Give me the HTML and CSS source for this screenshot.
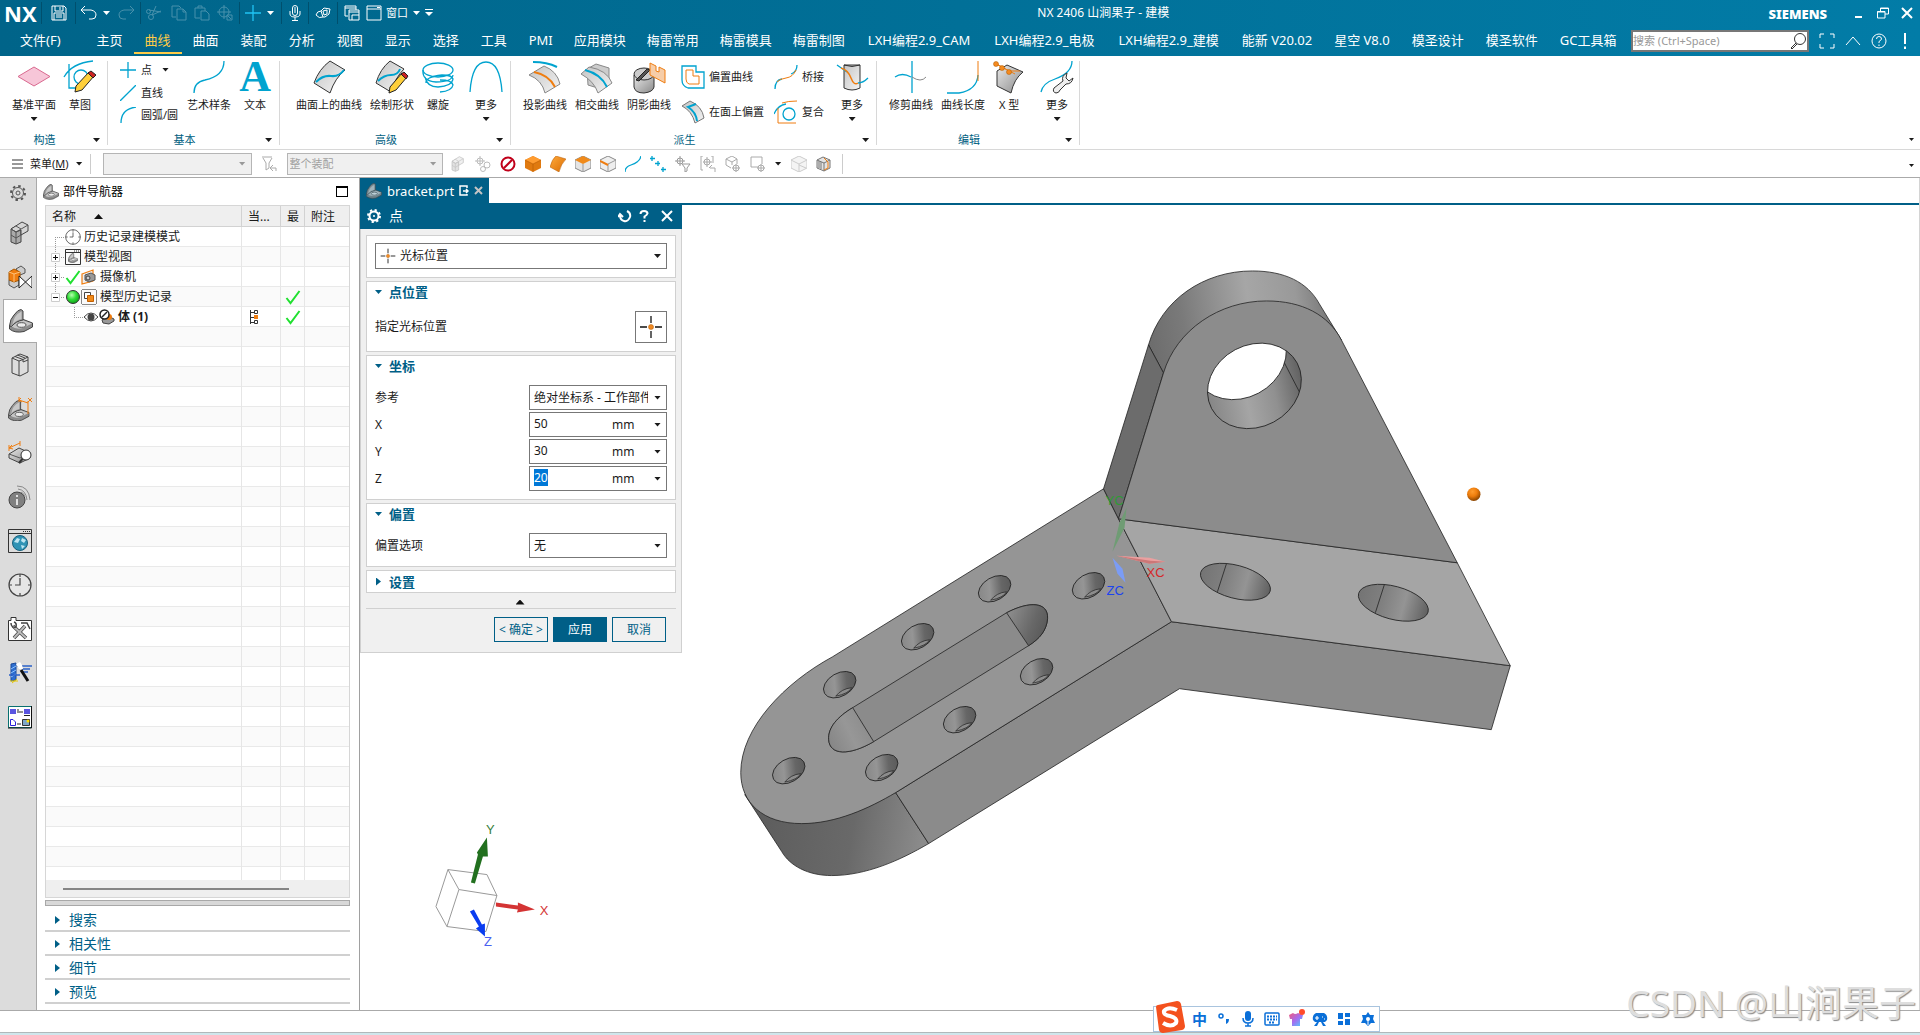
FILE: index.html
```html
<!DOCTYPE html>
<html lang="zh-CN">
<head>
<meta charset="utf-8">
<title>NX 2406 山涧果子 - 建模</title>
<link rel="stylesheet" href="styles.css">
</head>
<body>
<svg class="defs" width="0" height="0" aria-hidden="true">
  <defs>
    <linearGradient id="metal" x1="0" y1="0" x2="1" y2="1"><stop offset="0" stop-color="#e8e8e8"/><stop offset="1" stop-color="#8a8a8a"/></linearGradient>
    <linearGradient id="sheet" x1="0" y1="0" x2="1" y2="1"><stop offset="0" stop-color="#c4c4c4"/><stop offset="1" stop-color="#f4f4f4"/></linearGradient>
    <linearGradient id="gold" x1="0" y1="0" x2="1" y2="1"><stop offset="0" stop-color="#ffab3d"/><stop offset="1" stop-color="#d96a00"/></linearGradient>
    <radialGradient id="green" cx=".4" cy=".35" r=".7"><stop offset="0" stop-color="#b8ffb0"/><stop offset=".5" stop-color="#2fdc35"/><stop offset="1" stop-color="#0b9a18"/></radialGradient>
  </defs>
  <symbol id="part" viewBox="0 0 24 24"><path d="M.5 17 13 10 23.500 14V18L15 22.500Q6 24.500 .5 20Z" fill="#8c8c8c" stroke="#444"/><path d="M2 17Q7 12 13 11L23 14.500 14 19Q7 21 2 17Z" fill="#c6c6c6"/><ellipse cx="12.500" cy="16" rx="4.500" ry="2.300" fill="#ececec" stroke="#555"/><path d="M.5 17Q1 10 5 6 9 .5 12 .5L14 2V11Q7 12 2.500 17.500Z" fill="#9a9a9a" stroke="#444"/><path d="M3.500 15.500Q5 6 12.500 2.500V10Q7 11 3.500 15.500Z" fill="#c8c8c8"/></symbol>
  <symbol id="clock" viewBox="0 0 24 24"><circle cx="12" cy="12" r="11" fill="#fff" fill-opacity=".3" stroke="#444" stroke-width="1.200"/><path d="M12 5V12H7M12 1V4M12 20V23M1 12H4M20 12H23" fill="none" stroke="#444" stroke-width="1.200"/></symbol>
  <symbol id="check" viewBox="0 0 16 16"><path d="M1.500 9 5.500 14 14.500 2" fill="none" stroke="#20e030" stroke-width="2"/></symbol>
  <symbol id="cross" viewBox="0 0 24 24"><path d="M12 1V8M12 16V23M1 12H8M16 12H23" stroke="#111" stroke-width="1.300" fill="none"/><circle cx="12" cy="12" r="2.500" fill="#f08a24" stroke="#b45a00" stroke-width=".5"/></symbol>
  <symbol id="cubes" viewBox="0 0 24 24"><path d="M3 8 8 5 13 8V21L8 23 3 21Z" fill="#aaa" stroke="#444"/><path d="M3 8 14 1 20 4V10L13 14V9L8 11Z" fill="#d5d5d5" stroke="#444"/><path d="M3 8 8 11 20 4M8 11V23M8 5 13 8M3 14 8 17 13 14" fill="none" stroke="#555"/></symbol>
</svg>

<header class="app-head">
  <div class="titlebar">
    <div class="quick">
      <strong class="nx">NX</strong>
      <button class="q sep save" aria-label="保存"><svg width="16" height="16" viewBox="0 0 16 16"><path d="M1 1H13L15 3V15H1ZM4 1V6H12V1M9 2V5M3 15V8H13V15M5 10H11M5 12H11"/></svg></button>
      <button class="q sep" aria-label="撤销"><svg width="18" height="16" viewBox="0 0 18 16"><path d="M5 1 1 5 5 9M1 5H11Q16 6 16 10 16 14 12 14H9"/></svg></button>
      <i class="caret light"></i>
      <button class="q dim" aria-label="重做"><svg width="18" height="16" viewBox="0 0 18 16"><path d="M13 1 17 5 13 9M17 5H7Q2 6 2 10 2 14 6 14H9"/></svg></button>
      <button class="q sep dim after" aria-label="剪切"><svg width="16" height="16" viewBox="0 0 16 16"><path d="M10 1 6 10M3 5 15 7M6 10 15 6"/><circle cx="5" cy="12" r="2.500"/><circle cx="2.500" cy="6.500" r="2"/></svg></button>
      <button class="q dim" aria-label="复制"><svg width="16" height="16" viewBox="0 0 16 16"><path d="M5 12H1V1H8L10 3M6 4H12L15 7V15H6ZM12 4V7H15"/></svg></button>
      <button class="q dim" aria-label="粘贴"><svg width="16" height="16" viewBox="0 0 16 16"><path d="M6 13H1V3H11V6M4 3V1H8V3M7 6H12L15 9V15H7Z"/></svg></button>
      <button class="q dim" aria-label="定位"><svg width="16" height="16" viewBox="0 0 16 16"><circle cx="7" cy="7" r="5"/><path d="M7 0V14M0 7H14M10 10H15V15H10ZM10 10 14 14"/></svg></button>
      <button class="q sep after" aria-label="点"><svg width="16" height="16" viewBox="0 0 16 16"><path class="cy" d="M8 0V16M0 8H16"/></svg></button>
      <i class="caret light"></i>
      <button class="q sep after" aria-label="语音"><svg width="12" height="16" viewBox="0 0 12 16"><rect x="3.500" y=".5" width="5" height="10" rx="2.500"/><path d="M1 6V9Q1 12 6 12 11 12 11 9V6M6 12V15M3 15.500H9M5 3H7M5 5H7M5 7H7"/></svg></button>
      <button class="q sep wide" aria-label="擦除"><svg width="16" height="16" viewBox="0 0 16 16"><path d="M1 10Q2 6 6 6L8 12Q4 14 1 10M6 6 9 3 15 4 14 9 10 12 8 12M8 6 12 5 12 9 9 10Z"/></svg></button>
      <button class="q sep wide" aria-label="切换窗口"><svg width="16" height="16" viewBox="0 0 16 16"><path d="M4 11H1V1H12V5M1 3H12M5 5H15V15H5ZM5 7H15M8 10H15M8 10V15"/></svg></button>
      <button class="q win"><svg width="16" height="16" viewBox="0 0 16 16"><path d="M1 1H15V15H1ZM1 4H15M11 2.500H14"/></svg><span>窗口</span><i class="caret light"></i></button>
      <button class="q more" aria-label="自定义"><svg width="8" height="8" viewBox="0 0 8 8"><path d="M0 .5H8"/><path class="lit" d="M0 3H8L4 7Z"/></svg></button>
    </div>
    <h1>NX 2406 山涧果子 - 建模</h1>
    <div class="sys">
      <strong>SIEMENS</strong>
      <button aria-label="最小化"><svg width="12" height="12" viewBox="0 0 12 12"><path d="M2 10H9" stroke-width="2"/></svg></button>
      <button aria-label="还原"><svg width="12" height="12" viewBox="0 0 12 12"><path d="M3.500 4V1H11.500V7H8M3 1.500H12M.500 4.500H8V11H.500ZM0 5H8"/></svg></button>
      <button aria-label="关闭"><svg width="12" height="12" viewBox="0 0 12 12"><path d="M1 1 11 11M11 1 1 11" stroke-width="2"/></svg></button>
    </div>
  </div>
  <nav class="tabs">
    <button class="file">文件(F)</button>
    <button>主页</button><button class="on">曲线</button><button>曲面</button><button>装配</button><button>分析</button><button>视图</button><button>显示</button><button>选择</button><button>工具</button><button>PMI</button><button class="cjk4">应用模块</button><button class="cjk4">梅雷常用</button><button class="cjk4">梅雷模具</button><button class="cjk4">梅雷制图</button><button class="mixed">LXH编程2.9_CAM</button><button class="mixed">LXH编程2.9_电极</button><button class="mixed">LXH编程2.9_建模</button><button>能新 V20.02</button><button>星空 V8.0</button><button>模圣设计</button><button>模圣软件</button><button>GC工具箱</button>
    <div class="find">
      <label class="search"><input type="text" placeholder="搜索 (Ctrl+Space)" aria-label="搜索"><svg width="18" height="18" viewBox="0 0 18 18"><circle cx="11" cy="7" r="5.500" fill="none" stroke="#333"/><path d="M7 11 2 16M8 12 3 17M2 16 3 17" stroke="#333" fill="none"/></svg></label>
      <button aria-label="全屏"><svg width="16" height="16" viewBox="0 0 16 16"><path d="M1 5V1H5M11 1H15V5M15 11V15H11M5 15H1V11"/></svg></button>
      <button aria-label="收起"><svg width="16" height="16" viewBox="0 0 16 16"><path d="M1 12 8 4 15 12"/></svg></button>
      <button aria-label="帮助"><svg width="16" height="16" viewBox="0 0 16 16"><circle cx="8" cy="8" r="7"/><path d="M5.500 6Q5.500 3.500 8 3.500 10.500 3.500 10.500 6 10 7.500 8 8.500V10M8 11.500V13"/></svg></button>
      <button aria-label="提示"><svg width="16" height="16" viewBox="0 0 16 16"><path d="M8 0V11M8 13.500V16" stroke-width="2"/></svg></button>
    </div>
  </nav>
</header>

<section class="ribbon">
  <div class="group">
    <div class="tools">
      <button class="big"><svg viewBox="0 0 32 32"><path d="M0 15.500 16 6 32 15.500 16 25Z" fill="#f7c6d8" stroke="#d9698f"/></svg>基准平面<i class="caret"></i></button>
      <button class="big"><svg viewBox="0 0 32 32"><g class="cy"><path d="M5 3V27H16M0 16Q8 2 29 0"/><circle cx="17" cy="16" r="7"/></g><path d="M12 25 25 11 30 15 18 29 11 31Z" fill="#ffcf3a" stroke="#222"/><path d="M24 12 27 10 32 14 29 17Z" fill="#c22" stroke="#222"/></svg>草图</button>
    </div>
    <footer><span>构造</span><i class="caret"></i></footer>
  </div>
  <div class="group">
    <div class="tools">
      <div class="stack three">
        <button><svg width="16" height="16" viewBox="0 0 16 16"><path class="cy" d="M8 0V16M0 8H16"/></svg>点<i class="caret"></i></button>
        <button><svg width="16" height="16" viewBox="0 0 16 16"><path class="cy" d="M0 16 16 0"/></svg>直线</button>
        <button><svg width="16" height="16" viewBox="0 0 16 16"><path class="cy" d="M1 16Q1 2 16 0"/></svg>圆弧/圆</button>
      </div>
      <button class="big"><svg viewBox="0 0 32 32"><path class="cy" d="M1 32Q1 21 12 19 31 15 31 0"/></svg>艺术样条</button>
      <button class="big"><span class="glyph">A</span>文本</button>
    </div>
    <footer><span>基本</span><i class="caret"></i></footer>
  </div>
  <div class="group roomy">
    <div class="tools">
      <button class="big"><svg viewBox="0 0 32 32"><path d="M1 22Q6 8 17 0L32 9Q22 17 17 32Z" fill="url(#sheet)" stroke="#333"/><path class="cy thick" d="M3 21Q10 14 18 15T31 9"/></svg>曲面上的曲线</button>
      <button class="big"><svg viewBox="0 0 32 32"><path d="M0 22Q4 8 14 0L28 8Q19 17 15 31Z" fill="url(#sheet)" stroke="#333"/><path class="cy thick" d="M2 20Q8 14 15 14T24 8"/><path d="M14 26 26 12 31 16 20 29 13 32Z" fill="#ffcf3a" stroke="#222"/><path d="M25 13 28 11 32 15 30 18Z" fill="#c22" stroke="#222"/></svg>绘制形状</button>
      <button class="big"><svg viewBox="0 0 32 32"><g class="cy"><ellipse cx="16" cy="9" rx="15" ry="7"/><path d="M1 9Q0 20 14 21 30 21 31 14M3 16Q5 26 16 26 30 25 31 18 30 14 20 14 3 16 4 22M18 31Q30 30 31 24 30 19 18 19"/></g></svg>螺旋</button>
      <button class="big gapped"><svg viewBox="0 0 32 32"><path class="cy" d="M0 31Q2 1 16 1T32 31"/></svg>更多<i class="caret"></i></button>
    </div>
    <footer><span>高级</span><i class="caret"></i></footer>
  </div>
  <div class="group">
    <div class="tools">
      <button class="big"><svg viewBox="0 0 32 32"><path d="M0 14 15 5Q28 10 31 23L16 32Q13 19 0 14Z" fill="url(#sheet)" stroke="#888"/><path d="M5 11Q20 14 26 26" fill="none" stroke="#ef7d10" stroke-width="2"/><path class="cy thick" d="M4 1Q18 1 28 6"/></svg>投影曲线</button>
      <button class="big"><svg viewBox="0 0 32 32"><path d="M6 8 15 3 28 7 28 22 20 28 7 24Z" fill="#ccc" stroke="#888"/><path d="M0 13 8 6Q26 9 31 22L17 32Q13 20 0 13Z" fill="url(#sheet)" stroke="#888"/><path class="cy thick" d="M4 9Q20 13 26 26"/></svg>相交曲线</button>
      <button class="big"><svg viewBox="0 0 32 32"><path d="M1 14V26Q2 32 11 32 20 31 21 26V14Z" fill="url(#metal)" stroke="#333"/><ellipse cx="11" cy="13" rx="10" ry="6" fill="#ccc" stroke="#333"/><path d="M3 19 14 8 17 9 6 20Z" fill="#555" stroke="#222"/><path d="M17 12V2L23 5V10L26 11V6L32 9V22L17 14Z" fill="#f6cda8" stroke="#ef7d10"/></svg>阴影曲线</button>
      <div class="stack two first">
        <button><svg width="24" height="24" viewBox="0 0 24 24"><path class="cy" d="M1 1H15V7H23V23H7Q1 21 1 15Z"/><path d="M5 5H12V11H18V19H8Q5 18 5 14Z" fill="none" stroke="#ef7d10"/></svg>偏置曲线</button>
        <button><svg width="24" height="24" viewBox="0 0 24 24"><path d="M1 6 9 1Q21 6 23 18L14 23Q11 11 1 6Z" fill="url(#sheet)" stroke="#777"/><path class="cy thick" d="M15 4 7 7Q15 12 16 21"/></svg>在面上偏置</button>
      </div>
      <div class="stack two">
        <button><svg width="24" height="24" viewBox="0 0 24 24"><path class="cy" d="M1 24Q1 15 8 14M17 9Q23 7 23 0"/><path d="M3 17Q5 14 12 13T22 5" fill="none" stroke="#ef7d10"/></svg>桥接</button>
        <button><svg width="24" height="24" viewBox="0 0 24 24"><path class="cy" d="M0 14Q4 5 12 4"/><circle class="cy" cx="15" cy="14" r="6"/><path d="M8 3Q14 1 23 1M4 8V23H22" fill="none" stroke="#ef7d10"/></svg>复合</button>
      </div>
      <button class="big"><svg viewBox="0 0 32 32"><path d="M8 4V27Q16 31 24 27V4Z" fill="url(#sheet)" stroke="#333"/><path d="M8 4Q16 7 24 4" fill="none" stroke="#333"/><path class="cy" d="M1 4 11 11M22 22Q27 22 32 17"/><path d="M5 7Q12 9 15 17T22 22" fill="none" stroke="#ef7d10" stroke-width="1.500"/></svg>更多<i class="caret"></i></button>
    </div>
    <footer><span>派生</span><i class="caret"></i></footer>
  </div>
  <div class="group last">
    <div class="tools">
      <button class="big"><svg viewBox="0 0 32 32"><path class="cy" d="M17 0V32M0 16Q7 11 16 16"/><path d="M17 16Q26 22 31 16" fill="none" stroke="#888"/></svg>修剪曲线</button>
      <button class="big"><svg viewBox="0 0 32 32"><path class="cy" d="M0 32H12Q30 29 31 14"/><path d="M31 0V20" fill="none" stroke="#ef7d10"/></svg>曲线长度</button>
      <button class="big"><svg viewBox="0 0 32 32"><path d="M4 10 14 4 30 11Q21 18 18 32L4 25Z" fill="url(#metal)" stroke="#333"/><path d="M3 3 22 13M2 2 16 10 27 10" fill="none" stroke="#ef7d10"/><g fill="#f58a1f" stroke="#a85800" stroke-width=".5"><circle cx="3" cy="3" r="2.500"/><circle cx="9" cy="7" r="2.500"/><circle cx="16" cy="11" r="2.500"/></g></svg>X 型</button>
      <button class="big gapped"><svg viewBox="0 0 32 32"><path class="cy" d="M0 31Q2 22 14 18 31 12 31 0"/><path d="M26 12Q20 15 22 20L13 27Q11 31 15 32 18 32 19 29L25 23Q31 23 32 17L28 20 25 17Z" fill="#eee" stroke="#333"/></svg>更多<i class="caret"></i></button>
    </div>
    <footer><span>编辑</span><i class="caret"></i></footer>
  </div>
  <div class="overflow"><i class="caret"></i></div>
</section>

<section class="selbar">
  <button class="menu"><svg width="11" height="10" viewBox="0 0 11 10"><path d="M0 1H11M0 5H11M0 9H11" stroke="#333"/></svg><span>菜单(<u>M</u>)</span><i class="caret"></i></button>
  <span class="combo off w1"><select disabled aria-label="类型过滤器"><option></option></select><i class="caret"></i></span>
  <svg class="pic" width="17" height="18" viewBox="0 0 17 18"><path d="M1 2H11M2 3 5 8V15L8 13V8L11 3M10 13H15M12 10 9 13 12 16M15 13V16" fill="none" stroke="#aaa"/></svg>
  <span class="combo off w2"><select disabled aria-label="选择范围"><option>整个装配</option></select><i class="caret"></i></span>
  <div class="filters">
    <svg width="16" height="16" viewBox="0 0 24 24" opacity=".35"><use href="#cubes"/></svg>
    <svg width="16" height="16" viewBox="0 0 16 16"><g fill="none" stroke="#bbb"><circle cx="5" cy="5" r="3"/><path d="M5 0V10M0 5H10"/><circle cx="12" cy="9" r="3"/><circle cx="8" cy="13" r="2.500"/></g></svg>
    <svg width="16" height="16" viewBox="0 0 16 16"><circle cx="8" cy="8" r="6.500" fill="#fff" stroke="#c0001a" stroke-width="2"/><path d="M4 12 12 4" stroke="#c0001a" stroke-width="2"/></svg>
    <svg width="16" height="16" viewBox="0 0 16 16"><path d="M0 4 8 0 16 4V12L8 16 0 12Z" fill="#e07a10"/><path d="M0 4 8 0 16 4 8 8Z" fill="#ff9c30"/><path d="M0 4 8 8 16 4M8 8V16" stroke="#b65a00" fill="none" stroke-width=".6"/></svg>
    <svg width="16" height="16" viewBox="0 0 16 16"><path d="M0 11Q2 3 6 0L16 3Q11 8 9 16Z" fill="url(#gold)" stroke="#b65a00" stroke-width=".5"/></svg>
    <svg width="16" height="16" viewBox="0 0 16 16"><path d="M0 4 8 0 16 4V12L8 16 0 12Z" fill="#e4e4e4" stroke="#888"/><path d="M0 4 8 0 16 4 8 8Z" fill="#f08a1a"/><path d="M8 8V16" stroke="#999"/></svg>
    <svg width="16" height="16" viewBox="0 0 16 16"><path d="M0 4 8 0 16 4V12L8 16 0 12Z" fill="#eee" stroke="#888"/><path d="M8 8V16M8 8 16 4" stroke="#999"/><path d="M0 5 8 9" stroke="#ef7d10" stroke-width="2"/></svg>
    <svg width="16" height="16" viewBox="0 0 16 16"><path class="cy" d="M0 16Q0 11 6 9 15 6 16 0"/></svg>
    <svg width="16" height="16" viewBox="0 0 16 16"><path class="cy" d="M2 0V5M0 2.500H5M8 5V10M5 7.500H10M13 11V16M11 13.500H16"/></svg>
    <svg width="16" height="16" viewBox="0 0 16 16"><g fill="none" stroke="#999"><circle cx="5" cy="5" r="3"/><path d="M5 0V10M0 5H10M7 8H15L12 12V15L10 16V12Z"/></g></svg>
    <svg width="16" height="16" viewBox="0 0 16 16"><g fill="none" stroke="#aaa"><path d="M3 0H1V14H3M11 0H13V7M9 12 12 9M10 12H15V16"/><circle cx="7" cy="6" r="3"/><path d="M7 1V11M3 6H12"/></g></svg>
    <svg width="16" height="16" viewBox="0 0 16 16"><g fill="none" stroke="#aaa"><path d="M1 3 7 0 12 3V8M1 3V9L6 12M1 3 7 6 12 3M7 6V9"/><circle cx="11" cy="12" r="3"/><path d="M11 8V16M7 12H15"/></g></svg>
    <svg width="16" height="16" viewBox="0 0 16 16"><g fill="none" stroke="#aaa"><path d="M8 11H1V1H12V8"/><circle cx="11" cy="12" r="3"/><path d="M11 8V16M7 12H15"/></g></svg>
    <i class="caret"></i>
    <svg width="16" height="16" viewBox="0 0 16 16"><path d="M0 4 8 0 16 4V12L8 16 0 12Z" fill="#f4f4f4" stroke="#ccc"/><path d="M0 4 8 8 16 4M8 8V16M8 9 15 12" stroke="#ccc" fill="none"/></svg>
    <svg width="16" height="16" viewBox="0 0 16 16"><path d="M1 4 7 1 14 4V12L8 15 1 12Z" fill="#e4e4e4" stroke="#777"/><path d="M1 4 8 7 14 4M8 7V15M5 6V13M3 5V12" stroke="#777" fill="none"/><path d="M8 2 12 6V12L8 14" fill="none" stroke="#ef7d10"/></svg>
  </div>
  <div class="overflow"><i class="caret"></i></div>
</section>

<main class="work">
  <nav class="rail">
    <button class="gear" aria-label="设置"><svg width="16" height="16" viewBox="0 0 16 16"><circle cx="8" cy="8" r="5.500" fill="none" stroke="#555"/><circle cx="8" cy="8" r="7" fill="none" stroke="#555" stroke-width="2" stroke-dasharray="2.500 3"/><circle cx="8" cy="8" r="2" fill="none" stroke="#555"/></svg></button>
    <button aria-label="装配导航器"><svg width="24" height="24"><use href="#cubes"/></svg></button>
    <button aria-label="约束导航器"><svg width="24" height="24" viewBox="0 0 24 24"><path d="M8 4 13 1 17 4V8L12 10Z" fill="#ccc" stroke="#555"/><path d="M1 15H11V20L6 23 1 20Z" fill="#ccc" stroke="#555"/><path d="M1 7 6 4 12 7V15L6 17 1 15Z" fill="#ef7d10" stroke="#a85800"/><path d="M1 7 6 9 12 7M6 9V17" fill="none" stroke="#ffc27a"/><path d="M11 11 24 23V11L11 23Z" fill="#fff" stroke="#222"/></svg></button>
    <button class="on" aria-label="部件导航器"><svg width="24" height="24"><use href="#part"/></svg></button>
    <button aria-label="重用库"><svg width="24" height="24" viewBox="0 0 24 24"><g fill="#ddd" stroke="#444"><path d="M4 5 12 1 20 4V19L12 23 4 20Z"/><path d="M4 5 11 8V23M7 3.500 15 6.500 11 8M9.500 2 17 5M15 6.500V9L20 7M15 6.500 20 4" fill="none"/></g></svg></button>
    <button aria-label="PMI 导航器"><svg width="24" height="24" viewBox="0 0 24 24"><g transform="translate(0 3) scale(.9)"><use href="#part" width="24" height="24"/></g><path d="M11 0V5M11 3 20 6M20 4V17M20 1 24 5M24 1 20 5M13 1 11 3 14 5" fill="none" stroke="#ef7d10"/></svg></button>
    <button aria-label="检查"><svg width="24" height="24" viewBox="0 0 24 24"><path d="M1 13 11 7 22 12V17L12 22 1 17Z" fill="url(#metal)" stroke="#444"/><path d="M1 13 12 17 22 12" fill="none" stroke="#555"/><path d="M1 4V10M1 7 12 2M12 0V5M4 4 1 7 5 8" fill="none" stroke="#ef7d10"/><path d="M16 16 11 22" stroke="#333" stroke-width="2"/><circle cx="18" cy="14" r="5" fill="#fff" stroke="#333"/></svg></button>
    <button aria-label="信息"><svg width="24" height="24" viewBox="0 0 24 24"><circle cx="9" cy="15" r="8" fill="#808080" stroke="#444"/><path d="M9 10V12M9 14V20" stroke="#fff" stroke-width="1.500"/><path d="M10 4Q18 5 19 15M9 1Q21 1 22 15M13 7Q16 8 17 12" fill="none" stroke="#888"/></svg></button>
    <button aria-label="浏览器"><svg width="24" height="24" viewBox="0 0 24 24"><path d="M.5.500H23.500V23.500H.500ZM1 4.500H23" fill="#ddd" stroke="#333"/><path d="M15 2.500H22" stroke="#333" stroke-dasharray="1 1"/><circle cx="12" cy="14" r="7.500" fill="#2f93b5" stroke="#17607d"/><path d="M6 13 9 9 12 10 10 14ZM14 9 18 11 16 14 13 12ZM13 16 17 17 14 20Z" fill="#bfe6f2"/></svg></button>
    <button aria-label="历史记录"><svg width="24" height="24"><use href="#clock"/></svg></button>
    <button aria-label="工具箱"><svg width="24" height="24" viewBox="0 0 24 24"><path d="M.5 3.500H3V.500H8V3.500H23.500V23.500H.500Z" fill="#fff" stroke="#333"/><g stroke="#444" fill="none"><path d="M6 21 17 9M5 9 18 21" stroke-width="3.500"/><path d="M6 21 17 9M5 9 18 21" stroke-width="2" stroke="#bbb"/><path d="M3 6Q3 11 8 10M6 5Q9 6 8 10M13 6 19 6 22 12" stroke-width="1.500"/></g></svg></button>
    <button aria-label="加工向导"><svg width="24" height="24" viewBox="0 0 24 24"><path d="M3 3 8 2V19L3 20Z" fill="#2f6fd0" stroke="#1b4a9a"/><path d="M3 8 8 5M3 12 8 9M3 16 8 13" stroke="#8fc4ff"/><path d="M9 5H24M14 8H22M13 11H20M1 14H12" stroke="#2b62c8" stroke-width="1.500"/><path d="M13 9 20 20" stroke="#111" stroke-width="3"/><path d="M8 3 12 1 14 4 15 8 11 8Z" fill="#fff"/><path d="M2 20 10 20M4 22 9 18" stroke="#e8c800"/></svg></button>
    <button aria-label="流程图"><svg width="24" height="24" viewBox="0 0 24 24"><path d="M.5 1.500H23.500V22.500H.500Z" fill="#fff" stroke="#087070"/><path d="M23.500 1V23H0" fill="none" stroke="#111"/><path d="M2 4H8V9H2ZM16 4H22V9H16Z" fill="#5a55e0"/><path d="M9 5H11M9 7H15M9 19H13M16 10.500H22" stroke="#222"/><path d="M2.500 14.500H5L7.500 17V20.500H2.500Z" fill="#fff" stroke="#2a22d8"/><path d="M14.500 14.500H21.500V20.500H14.500Z" fill="#7ea6c8" stroke="#333"/><circle cx="20" cy="16" r="1.500" fill="#ffe000"/></svg></button>
  </nav>

  <aside class="navigator">
    <header><svg width="16" height="16"><use href="#part"/></svg><h2>部件导航器</h2><button aria-label="最大化"></button></header>
    <div class="tree">
      <table>
        <colgroup><col class="c1"><col class="c2"><col class="c3"><col></colgroup>
        <thead><tr><th><span>名称</span><i class="sort"></i></th><th>当...</th><th>最</th><th>附注</th></tr></thead>
        <tbody>
          <tr><td><div class="node"><svg width="19" height="20"><path class="dots" d="M9.500 10V20M9 10.500H19"/></svg><svg width="16" height="16"><use href="#clock"/></svg><span>历史记录建模模式</span></div></td><td></td><td></td><td></td></tr>
          <tr><td><div class="node"><svg width="19" height="20"><path class="dots" d="M9.500 0V20M9 10.500H19"/><path class="box" d="M5.500 6.500H13.500V14.500H5.500Z"/><path class="sign" d="M7 10.500H12M9.500 8V13"/></svg><svg width="16" height="16" viewBox="0 0 16 16"><path d="M.5.500H15.500V15.500H.500ZM1 3.500H15" fill="none" stroke="#333"/><path d="M9 2H14" stroke="#333" stroke-dasharray="1 1"/><use href="#part" x="3" y="4" width="10" height="10"/></svg><span>模型视图</span></div></td><td></td><td></td><td></td></tr>
          <tr><td><div class="node"><svg width="19" height="20"><path class="dots" d="M9.500 0V20M9 10.500H19"/><path class="box" d="M5.500 6.500H13.500V14.500H5.500Z"/><path class="sign" d="M7 10.500H12M9.500 8V13"/></svg><svg width="16" height="16"><use href="#check"/></svg><svg width="16" height="16" viewBox="0 0 16 16"><path d="M1 5 12 1V12L1 15Z" fill="#eee" stroke="#ef7d10" stroke-width="1.200"/><path d="M4 6 10 4 14 6V11L8 13 4 11Z" fill="#999" stroke="#555"/><circle cx="7" cy="9" r="2" fill="#ccc" stroke="#444"/></svg><span>摄像机</span></div></td><td></td><td></td><td></td></tr>
          <tr><td><div class="node"><svg width="19" height="20"><path class="dots" d="M9.500 0V10M9 10.500H19"/><path class="box" d="M5.500 6.500H13.500V14.500H5.500Z"/><path class="sign" d="M7 10.500H12"/></svg><svg width="16" height="16"><circle cx="8" cy="8" r="6.500" fill="url(#green)" stroke="#333"/></svg><svg width="16" height="16" viewBox="0 0 16 16"><path d="M1 .500H15M1 15.500H15M.500 1V15M15.500 1V15" stroke="#888" fill="none"/><path d="M3.500 3.500H9.500V9.500H3.500Z" fill="#fff" stroke="#444"/><path d="M6.500 6.500H12.500V12.500H6.500Z" fill="#f08a1a" stroke="#c25f00"/></svg><span>模型历史记录</span></div></td><td></td><td class="mark"><svg width="16" height="16"><use href="#check"/></svg></td><td></td></tr>
          <tr class="body"><td><div class="node"><svg width="37" height="20"><path class="dots" d="M28.500 0V10M28 10.500H37"/></svg><svg width="16" height="16" viewBox="0 0 16 16"><path d="M1 8Q8 0 15 8 8 16 1 8Z" fill="#fff" stroke="#444"/><circle cx="8" cy="8" r="3.500" fill="#444"/></svg><svg width="16" height="16" viewBox="0 0 16 16"><path d="M3 11 9 7 15 10V12L10 15 4 14Z" fill="#999" stroke="#444"/><circle cx="10" cy="8" r="3" fill="#ef7d10"/><circle cx="5.500" cy="5.500" r="4.500" fill="#fff" stroke="#222" stroke-width="1.500"/><path d="M3 8 8 3" stroke="#222" stroke-width="1.500"/></svg><span>体 (1)</span></div></td><td class="mark left"><svg width="16" height="16" viewBox="0 0 16 16"><path d="M2.500 1V15M2 3.500H6M2 8.500H6M2 13.500H6M6.500 1.500H9.500V4.500H6.500ZM6.500 11.500H9.500V14.500H6.500Z" fill="none" stroke="#333"/><path d="M6 6H10V10H6Z" fill="#ef7d10"/></svg></td><td class="mark"><svg width="16" height="16"><use href="#check"/></svg></td><td></td></tr>
        </tbody>
      </table>
      <div class="blank"></div>
      <div class="scroll"><i></i></div>
    </div>
    <div class="splitter"></div>
    <button class="sect"><i></i>搜索</button>
    <button class="sect"><i></i>相关性</button>
    <button class="sect"><i></i>细节</button>
    <button class="sect"><i></i>预览</button>
  </aside>

  <section class="stage">
    <div class="docs"><div class="doc"><svg width="16" height="16" opacity=".8"><use href="#part"/></svg><span>bracket.prt</span><svg width="10" height="11" viewBox="0 0 10 11"><path d="M8 3V1H1V10H8V9M4 6H9M7 4 9 6 7 8" fill="none" stroke="#fff" stroke-width="1.500"/></svg><button aria-label="关闭"><svg width="9" height="9" viewBox="0 0 9 9"><path d="M1 1 8 8M8 1 1 8" stroke="#c4c4c4" stroke-width="2"/></svg></button></div></div>
    <div class="view">
      <svg class="scene" viewBox="360 205 1560 805" preserveAspectRatio="xMinYMin meet">
        <defs>
          <linearGradient id="nose" gradientUnits="userSpaceOnUse" x1="750" y1="800" x2="925" y2="830"><stop offset="0" stop-color="#5b5b5b"/><stop offset=".2" stop-color="#606060"/><stop offset=".6" stop-color="#696969"/><stop offset="1" stop-color="#8b8b8b"/></linearGradient>
          <linearGradient id="band" gradientUnits="userSpaceOnUse" x1="1150" y1="355" x2="1340" y2="325"><stop offset="0" stop-color="#6c6c6c"/><stop offset=".2" stop-color="#7a7a7a"/><stop offset=".55" stop-color="#a6a6a6"/><stop offset=".8" stop-color="#999"/><stop offset="1" stop-color="#707070"/></linearGradient>
          <linearGradient id="bore" gradientUnits="userSpaceOnUse" x1="1208" y1="400" x2="1302" y2="380"><stop offset="0" stop-color="#858585"/><stop offset=".4" stop-color="#a5a5a5"/><stop offset=".7" stop-color="#909090"/><stop offset="1" stop-color="#636363"/></linearGradient>
          <linearGradient id="pin" x1="0" y1=".2" x2="1" y2=".5"><stop offset="0" stop-color="#858585"/><stop offset=".4" stop-color="#959595"/><stop offset=".75" stop-color="#666"/><stop offset="1" stop-color="#5c5c5c"/></linearGradient>
          <linearGradient id="oval" x1="0" y1="0" x2="1" y2="0"><stop offset="0" stop-color="#747474"/><stop offset=".35" stop-color="#808080"/><stop offset=".65" stop-color="#949494"/><stop offset="1" stop-color="#606060"/></linearGradient>
          <linearGradient id="endR" gradientUnits="userSpaceOnUse" x1="1010" y1="615" x2="1048" y2="630"><stop offset="0" stop-color="#8a8a8a"/><stop offset=".6" stop-color="#686868"/><stop offset="1" stop-color="#585858"/></linearGradient>
          <linearGradient id="endL" gradientUnits="userSpaceOnUse" x1="830" y1="745" x2="872" y2="725"><stop offset="0" stop-color="#868686"/><stop offset=".5" stop-color="#979797"/><stop offset="1" stop-color="#8b8b8b"/></linearGradient>
          <radialGradient id="ball" cx=".4" cy=".3" r=".7"><stop offset="0" stop-color="#ff9c2e"/><stop offset=".5" stop-color="#ee7d0c"/><stop offset="1" stop-color="#8a4400"/></radialGradient>
          <clipPath id="lugHole"><ellipse cx="1255" cy="386" rx="48.500" ry="41" transform="rotate(-28 1255 386)"/></clipPath>
          <g id="hole"><ellipse rx="17.500" ry="11.500" transform="rotate(-30)" fill="url(#pin)"/><path d="M-4 11.500Q2 4 12 3 9 9 -4 11.500Z" fill="#8c8c8c" stroke-width=".7"/></g>
        </defs>
        <g class="edges">
          <path d="M745 795 782 852C790 866 808 876 832 876 866 876 900 861 929 844L896 793Z" fill="url(#nose)"/>
          <path d="M896 793 1172 622 1511 666 1492 730 1180 689 929 844Z" fill="#8b8b8b"/>
          <path d="M1104 489 833 657C785 683 741 728 741 773 741 803 763 824 802 824 836 824 869 809 896 793L1172 622 1119 519Z" fill="#959595"/>
          <path d="M1119 519 1458 563 1511 666 1172 622Z" fill="#a5a5a5"/>
          <path d="M1149 345C1162 300 1204 271 1253 271 1285 271 1308 282 1320 304L1342 340 1164 373Z" fill="url(#band)"/>
          <path d="M1104 489 1149 345 1164 373 1119 519Z" fill="#6c6c6c"/>
          <path d="M1119 519 1164 373C1177 330 1220 301 1267 301 1303 301 1329 315 1342 340L1458 563Z" fill="#8c8c8c"/>
          <g clip-path="url(#lugHole)"><path d="M1190 330H1320V440H1190Z" fill="url(#bore)"/><ellipse cx="1240" cy="357" rx="48.500" ry="41" transform="rotate(-28 1240 357)" fill="#fff"/><path d="M1285 363 1300 392"/></g>
          <ellipse cx="1255" cy="386" rx="48.500" ry="41" transform="rotate(-28 1255 386)" fill="none"/>
          <path d="M853 708 1007 613C1030 601 1049 602 1048 619 1047 631 1040 639 1029 646L874 742C850 756 830 756 829 740 828 728 838 717 853 708Z" fill="#8b8b8b"/>
          <path d="M1007 613C1030 601 1049 602 1048 619 1047 631 1040 639 1029 646Z" fill="url(#endR)"/>
          <path d="M853 708C838 717 828 728 829 740 830 756 850 756 874 742Z" fill="url(#endL)"/>
          <use href="#hole" x="995" y="589"/><use href="#hole" x="918" y="637"/><use href="#hole" x="840" y="685"/><use href="#hole" x="789" y="771"/>
          <use href="#hole" x="882" y="768"/><use href="#hole" x="960" y="720"/><use href="#hole" x="1037" y="672"/><use href="#hole" x="1089" y="586"/>
          <ellipse cx="1236" cy="582" rx="36" ry="16.500" transform="rotate(15 1236 582)" fill="url(#oval)"/><path d="M1227 564 1218 592"/>
          <ellipse cx="1394" cy="603" rx="36" ry="16.500" transform="rotate(15 1394 603)" fill="url(#oval)"/><path d="M1385 585 1376 613"/>
        </g>
        <path d="M1113 552 1120 523 1127 508 1125 528Z" fill="#6f9c74"/>
        <path d="M1117 556 1150 558 1166 562 1150 564Z" fill="#eaa0a0"/><path d="M1117 556 1150 564 1166 562 1151 561Z" fill="#c77"/>
        <path d="M1113 558 1123 569 1126 583 1118 574Z" fill="#7b9cf5"/>
        <g class="lab"><text x="1106" y="505" fill="#2f9a35">YC</text><text x="1147" y="577" fill="#d62828">XC</text><text x="1107" y="595" fill="#1a43f0">ZC</text></g>
        <circle cx="1474.500" cy="494.500" r="6.700" fill="url(#ball)"/>
        <path d="M448 870 487 875 497 896 459 890ZM448 870 436 907 447 927 459 890M447 927 486 932 497 896" fill="none" stroke="#999"/>
        <path d="M471 883 478 855 477 853 487 838 488 857 483 857 475 884Z" fill="#22701f"/>
        <path d="M496 903 518 906 518 903 535 910 517 913 518 910 496 907Z" fill="#d43434"/>
        <path d="M470 912 474 910 482 925 485 924 485 937 476 929 479 927Z" fill="#0a3cf0"/>
        <g class="lab"><text x="486" y="834" fill="#3a8040">Y</text><text x="540" y="915" fill="#d43434">X</text><text x="484" y="946" fill="#4a60f0">Z</text></g>
      </svg>

      <form class="dialog" onsubmit="return false">
        <header><svg width="14" height="14" viewBox="0 0 14 14"><circle cx="7" cy="7" r="4.500" fill="none" stroke="#fff" stroke-width="2"/><circle cx="7" cy="7" r="6" fill="none" stroke="#fff" stroke-width="2" stroke-dasharray="2.200 2.500"/><circle cx="7" cy="7" r="1" fill="#fff"/></svg><h3>点</h3>
          <button type="button" aria-label="重置"><svg width="14" height="14" viewBox="0 0 14 14"><path d="M9 2Q13 4 12 8 10 13 6 12 2 11 2 6M0 8 2 5 5 8"/></svg></button>
          <button type="button" aria-label="帮助"><svg width="14" height="14" viewBox="0 0 14 14"><path d="M3.500 5Q3.500 2 7 2 10.500 2 10.500 4.500 10 6 7.500 7.500V9.500M7.500 11V13"/></svg></button>
          <button type="button" aria-label="关闭" class="x"><svg width="14" height="14" viewBox="0 0 14 14"><path d="M2 2 12 12M12 2 2 12"/></svg></button>
        </header>
        <div class="sheet">
          <fieldset><span class="combo type"><svg width="16" height="16"><use href="#cross"/></svg><select aria-label="类型"><option>光标位置</option></select><i class="caret"></i></span></fieldset>
          <fieldset><legend><i class="open"></i>点位置</legend>
            <div class="line tall"><label for="pick">指定光标位置</label><button type="button" id="pick" aria-label="指定光标位置"><svg width="24" height="24"><use href="#cross"/></svg></button></div></fieldset>
          <fieldset><legend><i class="open"></i>坐标</legend>
            <div class="line"><label for="ref">参考</label><span class="combo"><select id="ref"><option>绝对坐标系 - 工作部件</option></select><i class="caret"></i></span></div>
            <div class="line"><label for="px">X</label><span class="num"><input id="px" type="text" value="50"><select aria-label="X 单位"><option>mm</option></select><i class="caret"></i></span></div>
            <div class="line"><label for="py">Y</label><span class="num"><input id="py" type="text" value="30"><select aria-label="Y 单位"><option>mm</option></select><i class="caret"></i></span></div>
            <div class="line"><label for="pz">Z</label><span class="num"><input id="pz" type="text" value="20" autofocus><select aria-label="Z 单位"><option>mm</option></select><i class="caret"></i></span></div></fieldset>
          <fieldset><legend><i class="open"></i>偏置</legend>
            <div class="line"><label for="off">偏置选项</label><span class="combo"><select id="off"><option>无</option></select><i class="caret"></i></span></div></fieldset>
          <fieldset class="shut"><legend><i class="closed"></i>设置</legend></fieldset>
          <div class="fold"><i></i></div>
          <div class="acts"><button type="button">&lt; 确定 &gt;</button><button type="button" class="main">应用</button><button type="button">取消</button></div>
        </div>
      </form>
    </div>
  </section>
</main>

<footer class="status"></footer>

<div class="ime">
  <svg class="logo" width="32" height="32" viewBox="0 0 32 32"><path d="M2 6Q2 4 4 4L23 0Q26 0 27 3L31 25Q31 28 28 29L9 32Q6 32 5 29Z" fill="#f4511e"/><path d="M23 9Q14 5 10 10 9 14 16 15 24 17 22 22 17 27 9 22" fill="none" stroke="#fff" stroke-width="4"/></svg>
  <b>中</b>
  <svg viewBox="0 0 16 16"><circle cx="5" cy="5" r="2" fill="none" stroke="#0a6fd8" stroke-width="1.500"/><path d="M10 8H13Q13 12 10 13" fill="#0a6fd8"/></svg>
  <svg viewBox="0 0 16 16"><rect x="5" y="0" width="6" height="10" rx="3" fill="#0a6fd8"/><path d="M3 7Q3 12 8 12 13 12 13 7M8 12V15M5 15H11" fill="none" stroke="#0a6fd8" stroke-width="1.500"/></svg>
  <svg viewBox="0 0 16 16"><rect x="1" y="2" width="14" height="12" rx="1" fill="none" stroke="#0a6fd8" stroke-width="1.500"/><path d="M3 5.500H13M3 8.500H13M5 11.500H11" stroke="#0a6fd8" stroke-width="2" stroke-dasharray="2 1"/></svg>
  <svg viewBox="0 0 16 16"><defs><linearGradient id="shirt" x1="0" y1="0" x2="1" y2="1"><stop offset="0" stop-color="#f25a7a"/><stop offset=".5" stop-color="#a56cf0"/><stop offset="1" stop-color="#46d4ff"/></linearGradient></defs><path d="M1 4 5 2Q7 4 10 2L15 4 14 8H12V15H4V8H2Z" fill="url(#shirt)"/><circle cx="14" cy="1" r="3" fill="#ff4b2b"/></svg>
  <svg viewBox="0 0 16 16"><path d="M4 2H12Q16 4 15 9L13 11H3L1 9Q0 4 4 2ZM2 15 5 11H7L5 15ZM14 15 11 11H9L11 15Z" fill="#0a6fd8"/><path d="M3 7H7M5 5V9M10 6H11M12 8H13" stroke="#fff" stroke-width="1.200"/></svg>
  <svg viewBox="0 0 16 16"><path d="M2 2H7V8H2ZM9 2H14V6H9ZM2 10H7V14H2ZM9 8H14V14H9Z" fill="#0a6fd8"/></svg>
  <svg viewBox="0 0 16 16"><path d="M8 1 10 4 14 4 13 8 15 12 11 12 8 15 5 12 1 12 3 8 2 4 6 4Z" fill="#0a6fd8"/><circle cx="8" cy="8" r="2" fill="#fff"/><path d="M8 8V14" stroke="#fff"/></svg>
</div>
<div class="watermark">CSDN @山涧果子</div>
<script>
  document.getElementById('pz').select();
</script>
</body>
</html>
```
FILE: styles.css
```css
* { box-sizing: border-box; }
html, body { height: 100%; }
body {
  margin: 0;
  display: flex;
  flex-direction: column;
  background: #fff;
  color: #1a1a1a;
  font: 12px/16px "Noto Sans", "Noto Sans CJK SC", sans-serif;
  overflow: hidden;
}
button, input, select { font: inherit; color: inherit; margin: 0; padding: 0; border: 0; background: none; border-radius: 0; }
button { display: flex; align-items: center; justify-content: center; white-space: nowrap; }
input:focus, select:focus { outline: none; }
select { appearance: none; }
h1, h2, h3 { margin: 0; font-weight: 400; font-size: 12px; }
svg { flex: none; display: block; }
.defs { position: absolute; }
.caret { flex: none; width: 7px; height: 4px; background: #1a1a1a; clip-path: polygon(0 0, 100% 0, 50% 100%); }
.caret.light { background: #fff; }
.cy { fill: none; stroke: #00a3cf; stroke-width: 1.3; }
.thick { stroke-width: 2; }

/* title bar and tabs */
.app-head { background: linear-gradient(90deg, #006489, #027ca7); color: #fff; }
.titlebar { display: flex; align-items: center; height: 26px; }
.titlebar h1 { flex: 1; text-align: center; }
.quick { display: flex; align-items: center; padding-left: 4px; }
.quick svg, .sys svg, .find > button svg { fill: none; stroke: #fff; }
.quick svg .lit { fill: #fff; stroke: none; }
.quick svg .cy { stroke: #1fc4f4; }
.nx { width: 37px; font: 700 22px/24px "Open Sans", sans-serif; }
.q { width: 23px; height: 22px; }
.q.sep { border-left: 1px solid #004f6d; width: 27px; }
.q.save { width: 34px; }
.q.wide { width: 29px; }
.q.after { margin-left: 3px; }
.quick > .caret { margin: 0 4px 0 1px; }
.q.dim svg { opacity: .28; }
.q.win { width: auto; gap: 4px; font-size: 11px; }
.q.win .caret { margin-left: 1px; }
.q.more { width: 18px; }
.sys { display: flex; justify-content: flex-end; align-items: center; gap: 12px; padding-right: 7px; }
.sys strong { font: 900 13px/16px "Noto Sans", sans-serif; margin-right: 14px; padding-top: 2px; }
.tabs { display: flex; height: 30px; font-size: 13px; }
.tabs > button { padding: 2px 11px 0; border-bottom: 2px solid transparent; height: 28px; }
.tabs > .cjk4 { padding-left: 10px; }
.tabs > .mixed { padding-left: 12px; padding-right: 12px; }
.tabs > .file { padding: 2px 25px 0 20px; }
.tabs > .on { color: #ffcb47; border-color: #ffcb47; }
.find { flex: 1; display: flex; align-items: center; justify-content: flex-end; gap: 10px; padding: 4px 7px 4px 0; }
.search { display: flex; align-items: center; width: 178px; height: 22px; border: 2px solid #777; background: #fff; font-size: 11px; }
.search input { flex: 1; min-width: 0; color: #333; }
.search input::placeholder { color: #999; }

/* ribbon */
.ribbon { display: flex; height: 94px; border-bottom: 1px solid #d8d8d8; font-size: 11px; }
.group { display: flex; flex-direction: column; justify-content: space-between; margin: 5px 0 4px; padding-left: 8px; border-right: 1px solid #d8d8d8; }
.group.roomy { padding-left: 12px; }
.group.roomy footer { margin-left: -12px; }
.tools { display: flex; align-items: flex-start; padding-right: 4px; }
.big { flex-direction: column; justify-content: flex-start; min-width: 38px; padding: 0 4px; line-height: 14px; }
.big svg, .glyph { width: 32px; height: 32px; margin-bottom: 5px; overflow: visible; }
.big .caret { margin-top: 5px; }
.big.gapped { margin-left: 8px; }
.glyph { font: 700 44px/32px "Liberation Serif", serif; color: #00a3cf; }
.group footer { display: flex; align-items: center; height: 10px; margin-left: -8px; color: #00607f; line-height: 10px; }
.group footer span { flex: 1; text-align: center; }
.group footer .caret, .overflow .caret { margin: 0 7px 0 4px; }
.group:first-child .tools { padding-right: 7px; }
.group.last .tools { padding-right: 2px; }
.stack { display: flex; flex-direction: column; align-items: flex-start; }
.stack button { gap: 4px; }
.stack.three { padding: 0 5px 0 4px; }
.stack.three button { height: 23px; margin-top: -1px; gap: 5px; }
.stack.three button:first-child { height: 17px; margin: 0 0 4px; }
.stack.three .caret { margin-left: 5px; }
.stack.two { gap: 11px; padding: 4px 8px 0 2px; }
.stack.two.first { padding-left: 6px; }
.overflow { margin-left: auto; display: flex; align-items: flex-end; padding-bottom: 8px; }
.ribbon .overflow .caret, .selbar .overflow .caret { width: 5px; height: 3px; margin: 0 6px 0 0; }
.selbar .overflow { padding-top: 4px; padding-bottom: 0; }

/* selection bar */
.selbar { display: flex; align-items: center; height: 28px; border-bottom: 1px solid #aaa; font-size: 11px; }
.menu { gap: 7px; padding: 0 7px 0 12px; border-right: 1px solid #ccc; height: 20px; }
.combo, .num { display: flex; align-items: center; height: 25px; padding: 0 5px 0 4px; border: 1px solid #777; background: #fff; }
.combo select { flex: 1; min-width: 0; height: 100%; text-overflow: clip; overflow: hidden; }
.combo .caret { margin-left: 6px; }
.combo.off { height: 22px; border-color: #b5b5b5; background: #f0f0f0; color: #a0a0a0; padding-left: 2px; }
.combo.off select { opacity: 1; color: #a0a0a0; }
.combo.off .caret { background: #999; }
.w1 { width: 149px; margin-left: 12px; }
.w2 { width: 156px; }
.pic { margin: 0 9px; }
.filters { display: flex; align-items: center; gap: 9px; padding: 0 10px 0 7px; height: 20px; border-right: 1px solid #ccc; }

/* work area */
.work { flex: 1; min-height: 0; display: flex; border-bottom: 1px solid #aaa; }
.rail { width: 37px; background: #dcdcdc; border-right: 1px solid #a9a9a9; }
.rail button { width: 36px; height: 44px; padding-left: 3px; }
.rail .gear { height: 33px; padding: 0 0 3px; }
.rail .on { width: 34px; margin-left: 3px; padding: 0; background: #fff; border: 1px solid #a9a9a9; border-right: 0; position: relative; }
.navigator { display: flex; flex-direction: column; width: 323px; padding: 0 9px 6px 8px; border-right: 1px solid #a0a0a0; }
.navigator header { display: flex; align-items: center; height: 27px; gap: 4px; margin-left: -2px; color: #000; }
.navigator header button { width: 12px; height: 11px; margin: 0 2px 0 auto; border: 1px solid #000; border-top-width: 2px; }
.tree { flex: 1; min-height: 0; display: flex; flex-direction: column; border: 1px solid #d6d6d6; }
table { width: 100%; table-layout: fixed; border-collapse: separate; border-spacing: 0; }
.c1 { width: 196px; } .c2 { width: 39px; } .c3 { width: 24px; }
th, td { padding: 0; border-right: 1px solid #e6e6e6; border-bottom: 1px solid #e9e9e9; height: 20px; }
th:last-child, td:last-child { border-right: 0; }
th { height: 21px; padding: 2px 0 0 6px; background: #efefef; border-color: #d2d2d2; font-weight: 400; text-align: left; white-space: nowrap; line-height: 16px; }
.sort { display: inline-block; margin: 0 0 2px 18px; width: 9px; height: 5px; background: #111; clip-path: polygon(50% 0, 100% 100%, 0 100%); }
tbody tr:nth-child(even) { background: #fafafa; }
.node { display: flex; align-items: center; height: 19px; white-space: nowrap; }
.node span { margin-left: 3px; }
.body { font-weight: 700; }
.dots { fill: none; stroke: #999; stroke-dasharray: 1 1; }
.box { fill: #fff; stroke: #ccc; }
.sign { stroke: #111; }
.mark svg { margin: 0 auto; }
.mark.left svg { margin: 0 0 0 6px; }
.blank {
  flex: 1;
  background:
    linear-gradient(#e6e6e6, #e6e6e6) 195px 0 / 1px 100% no-repeat,
    linear-gradient(#e6e6e6, #e6e6e6) 234px 0 / 1px 100% no-repeat,
    linear-gradient(#e6e6e6, #e6e6e6) 258px 0 / 1px 100% no-repeat,
    repeating-linear-gradient(#fafafa 0 19px, #e9e9e9 19px 20px, #fff 20px 39px, #e9e9e9 39px 40px);
}
.scroll { height: 17px; padding: 8px 60px 0 17px; background: #efefef; }
.scroll i { display: block; height: 2px; background: #858585; }
.splitter { height: 6px; margin: 2px 0; border: 1px solid #a8a8a8; background: #d8d8d8; }
.sect { justify-content: flex-start; gap: 9px; height: 24px; padding: 2px 0 0 10px; border-bottom: 2px solid #d0d0d0; color: #005f87; font-size: 14px; }
.sect i, .closed { width: 5px; height: 8px; background: #005f87; clip-path: polygon(0 0, 100% 50%, 0 100%); }

.stage { flex: 1; min-width: 0; display: flex; flex-direction: column; border-right: 1px solid #d4d4d4; }
.docs { height: 27px; border-bottom: 2px solid #005f87; }
.doc { display: inline-flex; align-items: center; gap: 5px; height: 25px; padding: 0 6px; background: #005f87; color: #fff; font-size: 13px; }
.view { flex: 1; min-height: 0; position: relative; }
.scene { width: 100%; height: 100%; }
.edges { stroke: #222; stroke-width: 0.8; stroke-linejoin: round; }
.lab { font: 13px "Liberation Sans", sans-serif; }

/* point dialog */
.dialog { position: absolute; left: 0; top: -2px; width: 322px; background: #f0f0f0; border: 1px solid #d0d0d0; border-top: 0; }
.dialog > header { display: flex; align-items: center; height: 26px; margin: 0 -1px; padding: 0 8px 0 7px; background: #005f87; color: #fff; }
.dialog h3 { flex: 1; margin-left: 8px; font-size: 14px; }
.dialog header button { margin-left: 5px; }
.dialog header .x { margin-left: 9px; }
.dialog header button svg { fill: none; stroke: #fff; stroke-width: 2; }
.sheet { padding: 6px 5px 10px; }
fieldset { min-width: 0; margin: 0 0 3px; padding: 0 8px 8px; border: 1px solid #d0d0d0; background: #fff; }
fieldset:first-child { padding-top: 7px; }
legend { float: left; display: flex; align-items: center; width: 100%; height: 20px; margin-bottom: 9px; padding: 0; gap: 7px; color: #005f87; font-size: 13px; font-weight: 700; }
.shut { padding-bottom: 0; display: flex; }
.shut legend { height: 21px; margin: 0; }
.closed { margin: 0 1px; }
.open { width: 7px; height: 4px; background: #005f87; clip-path: polygon(0 0, 100% 0, 50% 100%); }
.type { height: 26px; gap: 4px; }
.line { clear: both; display: flex; align-items: center; justify-content: space-between; height: 25px; }
.line + .line { margin-top: 2px; }
.line.tall { height: 32px; }
.line .combo, .num { width: 138px; }
.line button { width: 32px; height: 32px; border: 1px solid #777; background: #fff; }
.num input { width: 78px; height: 17px; margin-bottom: 3px; }
.num select { flex: 1; height: 100%; }
input::selection { background: #0078d7; color: #fff; }
.fold { display: flex; justify-content: center; align-items: center; height: 13px; border-bottom: 1px solid #d0d0d0; padding-right: 2px; }
.fold i { width: 9px; height: 5px; background: #111; clip-path: polygon(50% 0, 100% 100%, 0 100%); }
.acts { display: flex; justify-content: flex-end; gap: 5px; padding: 8px 10px 0; }
.acts button { width: 54px; height: 25px; border: 1px solid #005f87; color: #005f87; }
.acts .main { background: #005f87; color: #fff; }

.status { height: 24px; border-bottom: 2px solid #cfe6ec; box-shadow: inset 0 -1px #b0b8ba; }
.ime { position: absolute; right: 540px; bottom: 3px; display: flex; align-items: center; gap: 8px; height: 26px; padding: 0 3px 0 0; background: #fff; border: 1px solid #a9c4de; color: #0a6fd8; }
.ime svg { width: 16px; height: 16px; overflow: visible; }
.ime .logo { width: 32px; height: 32px; margin: -4px -2px 0 0; }
.ime b { width: 16px; font-size: 15px; line-height: 16px; }
.watermark { position: absolute; right: 4px; bottom: 10px; font-size: 37px; line-height: 44px; color: #dedede; text-shadow: 1px 1px 1px #8a8a8a; white-space: nowrap; }
```
